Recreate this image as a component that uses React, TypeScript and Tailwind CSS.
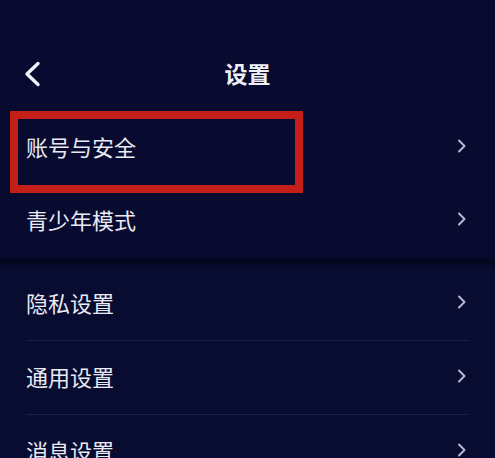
import React from "react";

const font = { fontFamily: '"Noto Sans CJK SC", "Noto Sans", sans-serif' };

function Chevron() {
  return (
    <svg width="12" height="16" viewBox="0 0 12 16" className="shrink-0">
      <path d="M3 2.5 L8.5 8 L3 13.5" fill="none" stroke="#b4b7d6" strokeWidth="2" strokeLinecap="round" strokeLinejoin="round" />
    </svg>
  );
}

function Row({ label, divider }: { label: string; divider?: boolean }) {
  return (
    <div className="mx-[26px]">
      <div className="h-[73px] pb-[4px] flex items-center justify-between pr-[1px]">
        <span className="text-[22px] text-[#e9eaf4] leading-none">{label}</span>
        <Chevron />
      </div>
      {divider && <div className="h-px bg-[#1b1e48]" />}
    </div>
  );
}

export default function App() {
  return (
    <div className="w-[495px] h-[458px] overflow-hidden bg-[#080b2f] relative" style={font}>
      <div className="h-[37px]" />
      <div className="h-[74px] pb-[2px] relative flex items-center justify-center">
        <div className="absolute left-[22px] top-[24px]">
          <svg width="22" height="28" viewBox="0 0 22 28">
            <path d="M16 2.5 L5 13 L16 23.5" fill="none" stroke="#f2f3f8" strokeWidth="3.4" strokeLinecap="round" strokeLinejoin="round" />
          </svg>
        </div>
        <span className="text-[23px] font-bold text-[#eef0f6] leading-none">设置</span>
      </div>
      <div className="relative">
        <Row label="账号与安全" />
        <Row label="青少年模式" />
        <div className="absolute left-[10px] top-0 w-[293px] h-[82px] border-[8px] border-[#c31f18]" />
      </div>
      <div className="h-[10px] bg-gradient-to-b from-[#070a2a] via-[#04061e] to-[#080b2f]" />
      <div className="bg-[#090c31]">
        <Row label="隐私设置" divider />
        <Row label="通用设置" divider />
        <Row label="消息设置" />
      </div>
    </div>
  );
}
